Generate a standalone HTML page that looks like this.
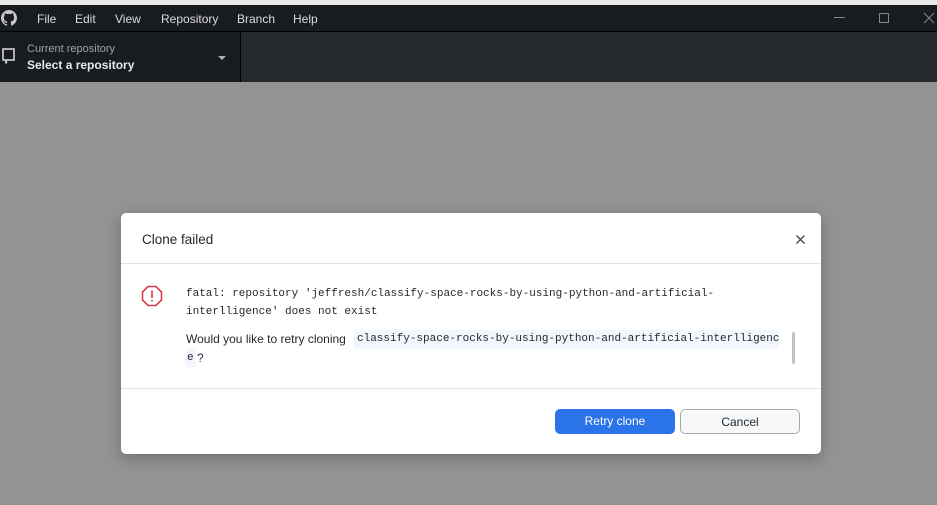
<!DOCTYPE html>
<html><head><meta charset="utf-8"><style>
*{box-sizing:border-box;margin:0;padding:0}
body{width:937px;height:505px;overflow:hidden;background:#939393;font-family:"Liberation Sans",sans-serif;position:relative}
.top{position:absolute;left:0;top:0;width:937px;height:5px;background:#e8e8e8}
.title{position:absolute;left:0;top:5px;width:937px;height:27px;background:#181b1f;border-bottom:1px solid #000}
.menu{position:absolute;top:7px;font-size:12px;color:#dcdcdc}
.bar{position:absolute;left:0;top:32px;width:937px;height:50px;background:#25292e}
.repo{position:absolute;left:0;top:0;width:241px;height:50px;background:#181b1f;border-right:1px solid #000}
.mono{font-family:"Liberation Mono",monospace;font-size:11px;white-space:nowrap}
.dlg{position:absolute;left:121px;top:213px;width:700px;height:241px;background:#fff;border-radius:5px;box-shadow:0 4px 14px rgba(0,0,0,.25)}
.btn{position:absolute;top:196px;height:25px;border-radius:5px;font-size:12px;text-align:center;line-height:24px}
</style></head><body>
<div class="top"></div>
<div class="title">
<svg style="position:absolute;left:1px;top:5px" width="16" height="16" viewBox="0 0 16 16"><path fill="#c8c8c8" d="M8 0C3.58 0 0 3.58 0 8c0 3.54 2.29 6.53 5.47 7.59.4.07.55-.17.55-.38v-1.33c-2.23.48-2.7-1.07-2.7-1.07-.36-.92-.89-1.17-.89-1.17-.73-.5.06-.49.06-.49.8.06 1.23.83 1.23.83.71 1.22 1.87.87 2.33.66.07-.52.28-.87.51-1.07-1.78-.2-3.64-.89-3.64-3.95 0-.87.31-1.59.82-2.15-.08-.2-.36-1.02.08-2.12 0 0 .67-.21 2.2.82A7.6 7.6 0 0 1 8 3.86c.68 0 1.36.09 2 .27 1.53-1.04 2.2-.82 2.2-.82.44 1.1.16 1.92.08 2.12.51.56.82 1.27.82 2.15 0 3.07-1.87 3.75-3.65 3.95.29.25.54.73.54 1.48v2.2c0 .21.15.46.55.38A8 8 0 0 0 16 8c0-4.42-3.58-8-8-8z"/></svg>
<span class="menu" style="left:37px">File</span>
<span class="menu" style="left:75px">Edit</span>
<span class="menu" style="left:115px">View</span>
<span class="menu" style="left:161px">Repository</span>
<span class="menu" style="left:237px">Branch</span>
<span class="menu" style="left:293px">Help</span>
<div style="position:absolute;left:834px;top:12px;width:11px;height:1px;background:#888"></div>
<div style="position:absolute;left:879px;top:8px;width:10px;height:10px;border:1px solid #888"></div>
<svg style="position:absolute;left:923px;top:7px" width="12" height="12"><path d="M1 1L11 11M11 1L1 11" stroke="#888" stroke-width="1"/></svg>
</div>
<div class="bar"><div class="repo">
<svg style="position:absolute;left:2px;top:16px" width="13" height="17" viewBox="0 0 13 17"><rect x="1" y="1" width="11" height="11" fill="none" stroke="#c8c8c8" stroke-width="1.7"/><rect x="3" y="12" width="2.2" height="3.5" fill="#c8c8c8"/></svg>
<div style="position:absolute;left:27px;top:11px;font-size:11px;color:#a0a4a8">Current repository</div>
<div style="position:absolute;left:27px;top:26px;font-size:12px;font-weight:bold;color:#e8e8e8">Select a repository</div>
<div style="position:absolute;left:218px;top:24px;border-left:4px solid transparent;border-right:4px solid transparent;border-top:4px solid #b0b0b0"></div>
</div></div>
<div class="dlg">
<div style="position:absolute;left:21px;top:19px;font-size:13.5px;color:#24292e">Clone failed</div>
<svg style="position:absolute;left:675px;top:22px" width="9" height="9"><path d="M.5 .5L8.5 8.5M8.5 .5L.5 8.5" stroke="#444" stroke-width="1.3"/></svg>
<div style="position:absolute;left:0;top:50px;width:700px;height:1px;background:#e1e4e8"></div>
<svg style="position:absolute;left:20px;top:72px" width="22" height="22" viewBox="0 0 22 22"><path d="M7 1.5H15L20.5 7V15L15 20.5H7L1.5 15V7Z" fill="none" stroke="#d73a49" stroke-width="1.6"/><rect x="10.2" y="5.5" width="1.6" height="7.5" fill="#d73a49"/><rect x="10.2" y="14.8" width="1.6" height="1.8" fill="#d73a49"/></svg>
<div class="mono" style="position:absolute;left:65px;top:72px;color:#24292e;line-height:18px">fatal: repository 'jeffresh/classify-space-rocks-by-using-python-and-artificial-<br>interlligence' does not exist</div>
<div style="position:absolute;left:65px;top:119px;font-size:12px;color:#24292e">Would you like to retry cloning</div>
<div class="mono" style="position:absolute;left:233px;top:117px;width:425px;height:19px;overflow:hidden;background:#f1f7fd;color:#24292e;padding:3px 0 0 3px">classify-space-rocks-by-using-python-and-artificial-interlligenc</div>
<div class="mono" style="position:absolute;left:65px;top:136px;width:10px;height:18px;background:#f1f7fd;color:#24292e;padding:3px 0 0 1px">e</div>
<div style="position:absolute;left:76px;top:138px;font-size:12px;color:#24292e">?</div>
<div style="position:absolute;left:671px;top:119px;width:3px;height:32px;background:#c2c2c2;border-radius:2px"></div>
<div style="position:absolute;left:0;top:175px;width:700px;height:1px;background:#e1e4e8"></div>
<div class="btn" style="left:434px;width:120px;background:#2a73e8;color:#fff">Retry clone</div>
<div class="btn" style="left:559px;width:120px;background:#f6f8fa;border:1px solid #a8acb0;color:#24292e">Cancel</div>
</div>
</body></html>
